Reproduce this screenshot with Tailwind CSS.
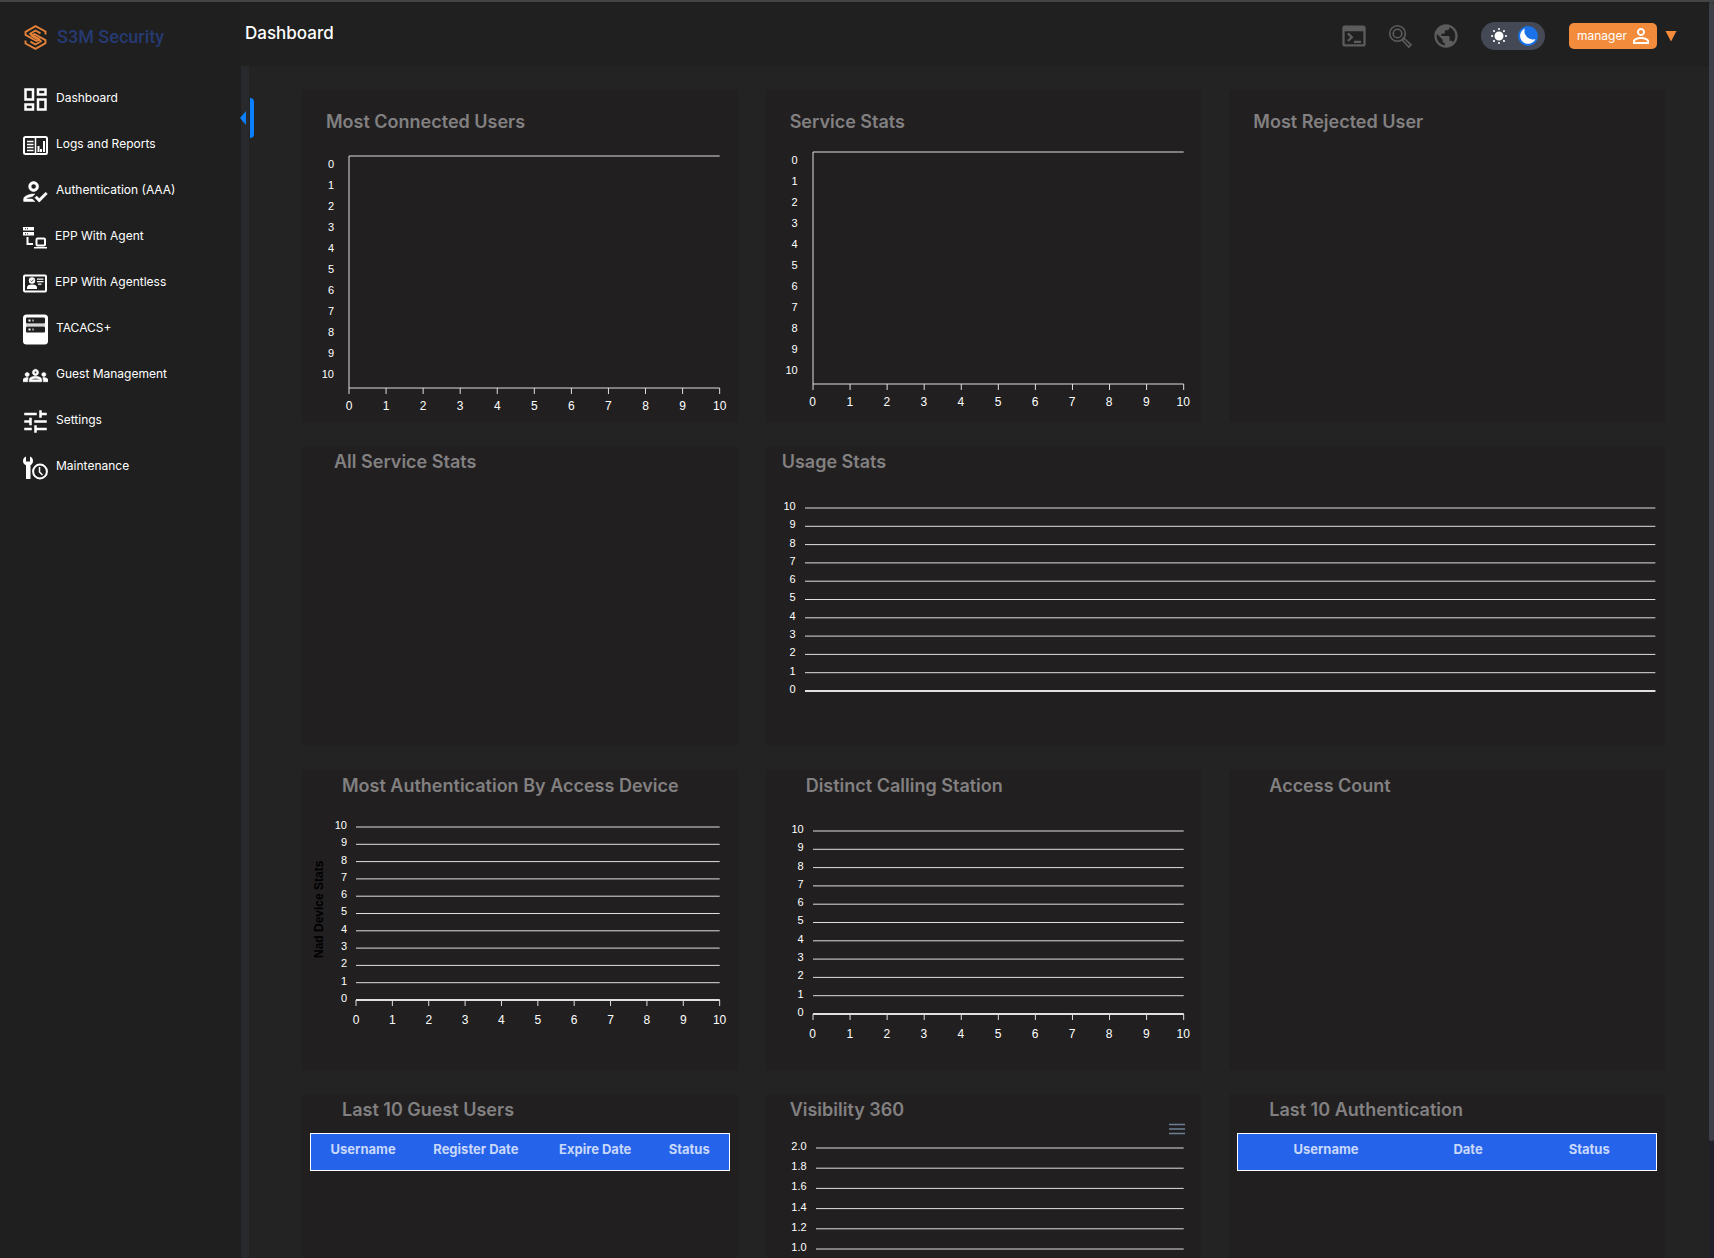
<!DOCTYPE html>
<html lang="en">
<head>
  <meta charset="UTF-8" />
  <meta name="viewport" content="width=device-width, initial-scale=1.0" />
  <title>S3M Security - Dashboard</title>
  <script src="https://cdn.jsdelivr.net/npm/@tailwindcss/browser@4"></script>
</head>
<body class="bg-[#222322] text-white font-['Inter',sans-serif] h-screen flex flex-col overflow-hidden">

  <div class="h-0.5 shrink-0 bg-[#444444]"></div>

  <div class="flex flex-1 min-h-0">

    <!-- Sidebar -->
    <aside class="w-[241px] shrink-0 bg-[#1f1f1f] flex flex-col">
      <a href="#" class="flex items-center gap-[10px] h-[70px] pl-6 text-[#263a72] font-['Roboto',sans-serif] font-medium text-lg">
        <svg class="w-[23px] h-[25px]" viewBox="0 0 23 25" fill="none" stroke="#e58239" stroke-width="1.9" stroke-linejoin="round">
          <path d="M21.500 9.500V6.500L11.500 1.200L1.500 6.800V9.800L12.500 16L15.500 14.300L6 8.800L11.500 5.500L16.500 8.300" />
          <path d="M1.500 15.500V18.500L11.500 23.800L21.500 18.200V15.200L10.500 9L7.500 10.700L17 16.200L11.500 19.500L6.500 16.700" />
        </svg>
        S3M Security
      </a>
      <nav id="menu" class="flex flex-col pl-[23px] pt-1"></nav>
    </aside>

    <div class="flex-1 min-w-0 flex flex-col">

      <!-- Top bar -->
      <header class="h-16 shrink-0 bg-[#202020] flex items-center justify-between pl-1 pr-8">
        <h1 class="text-[17px] font-medium">Dashboard</h1>
        <div class="flex items-center pt-1 text-[#5c5c5c]">
          <div class="flex items-center gap-[18px]">
            <button type="button" aria-label="Console">
              <svg class="size-7" viewBox="0 0 24 24" fill="currentColor"><path d="M20 3H4c-1.110 0-2 .9-2 2v14c0 1.100.89 2 2 2h16c1.100 0 2-.9 2-2V5c0-1.100-.89-2-2-2zm0 16H4V8h16v11zm-2-1h-6v-2h6v2zM7.500 17l-1.410-1.410L8.670 13l-2.590-2.590L7.500 9l4 4-4 4z"/></svg>
            </button>
            <button type="button" aria-label="Search">
              <svg class="size-7" viewBox="0 0 28 28" fill="none" stroke="currentColor" stroke-width="1.6"><circle cx="11.500" cy="11.500" r="7.800"/><circle cx="11.500" cy="11.500" r="4.300"/><path d="M16 17.800L17.800 16L25 22.800L22.800 25Z"/></svg>
            </button>
            <button type="button" aria-label="Language">
              <svg class="size-7" viewBox="0 0 24 24" fill="currentColor"><path d="M12 2C6.480 2 2 6.480 2 12s4.480 10 10 10 10-4.480 10-10S17.520 2 12 2zm-1 17.930c-3.950-.49-7-3.850-7-7.930 0-.62.08-1.210.21-1.790L9 15v1c0 1.100.9 2 2 2v1.930zm6.900-2.540c-.26-.81-1-1.390-1.900-1.390h-1v-3c0-.55-.45-1-1-1H8v-2h2c.55 0 1-.45 1-1V7h2c1.100 0 2-.9 2-2v-.41c2.930 1.190 5 4.060 5 7.410 0 2.080-.8 3.970-2.100 5.390z"/></svg>
            </button>
          </div>
          <label class="ml-[21px] w-16 h-7 rounded-full bg-[#444955] flex items-center justify-between pl-2 pr-[7px] cursor-pointer">
            <input type="checkbox" class="sr-only" aria-label="Dark mode" checked />
            <svg class="size-5" viewBox="0 0 20 20" fill="#ffffff" stroke="#ffffff" stroke-width="2"><circle cx="10" cy="10" r="3.500"/><path stroke-linecap="round" d="M10 3v.1M10 16.900v.1M3 10h.1M16.900 10h.1M5 5l.1.100M14.900 14.900l.1.100M15 5l-.1.100M5.100 14.900l-.1.100"/></svg>
            <svg class="size-5" viewBox="0 0 20 20"><circle cx="10" cy="10" r="10" fill="#1b72e8"/><path fill="#ffffff" d="M7 2.500A8 8 0 1 0 17.500 13A8.200 8.200 0 0 1 7 2.500Z"/></svg>
          </label>
          <button type="button" class="ml-6 w-[88px] h-[26px] rounded-[5px] bg-[#f38b3c] text-white text-xs flex items-center justify-between px-2">
            manager
            <svg class="w-4 h-4" viewBox="4 4 16 16" fill="currentColor"><path d="M12 5.900c1.160 0 2.100.94 2.100 2.100s-.94 2.100-2.100 2.100S9.900 9.160 9.900 8s.94-2.100 2.100-2.100m0 9c2.970 0 6.100 1.460 6.100 2.100v1.100H5.900V17c0-.64 3.130-2.100 6.100-2.100M12 4C9.790 4 8 5.790 8 8s1.790 4 4 4 4-1.790 4-4-1.790-4-4-4zm0 9c-2.670 0-8 1.340-8 4v3h16v-3c0-2.660-5.330-4-8-4z"/></svg>
          </button>
          <button type="button" aria-label="Open user menu" class="ml-2 text-[#f38b3c]">
            <svg class="w-3 h-3" viewBox="0 0 12 12" fill="currentColor"><path d="M0.500 1H11.500L6 11.500Z"/></svg>
          </button>
        </div>
      </header>

      <div class="flex flex-1 min-h-0">
        <div class="relative w-2 shrink-0 bg-[#27292c]">
          <button type="button" aria-label="Collapse sidebar" class="absolute top-8 -left-px flex items-center gap-1">
            <svg class="w-1.5 h-3.5" viewBox="0 0 6 14" fill="#0a80ff"><path d="M6 0V14L0 7Z"/></svg>
            <span class="w-1 h-10 rounded-r bg-[#0a80ff]"></span>
          </button>
        </div>

        <main class="flex-1 min-w-0 overflow-y-auto [scrollbar-width:none] pl-[53px] pr-11 pt-6">
          <div class="grid grid-cols-3 gap-x-7 gap-y-6 text-[#828080]">

            <section class="bg-[#211f20] h-[332px] pt-4">
              <h2 class="pl-6 text-lg leading-8 font-semibold">Most Connected Users</h2>
              <div data-chart="bar" class="mt-[18px] pr-[18px] grid grid-cols-[32px_1fr] gap-x-[15px]"></div>
            </section>

            <section class="bg-[#211f20] h-[332px] pt-4">
              <h2 class="pl-6 text-lg leading-8 font-semibold">Service Stats</h2>
              <div data-chart="bar" class="mt-[14px] pr-[18px] grid grid-cols-[32px_1fr] gap-x-[15px]"></div>
            </section>

            <section class="bg-[#211f20] h-[332px] pt-4">
              <h2 class="pl-6 text-lg leading-8 font-semibold">Most Rejected User</h2>
            </section>

            <section class="bg-[#211f20] h-[300px]">
              <h2 class="pl-8 text-lg leading-8 font-semibold">All Service Stats</h2>
            </section>

            <section class="bg-[#211f20] h-[300px] col-span-2">
              <h2 class="pl-4 text-lg leading-8 font-semibold">Usage Stats</h2>
              <div data-chart="usage" class="mt-[30px] pr-[10px] grid grid-cols-[30px_1fr] gap-x-[9px]"></div>
            </section>

            <section class="bg-[#211f20] h-[300px]">
              <h2 class="pl-10 text-lg leading-8 font-semibold">Most Authentication By Access Device</h2>
              <div class="mt-[25px] pl-2 pr-[18px] flex">
                <p class="w-[18px] h-[164px] text-black text-xs leading-[18px] font-bold text-center [writing-mode:vertical-rl] rotate-180 font-['Liberation_Sans',sans-serif]">Nad Device Stats</p>
                <div data-chart="device" class="flex-1 grid grid-cols-[19px_1fr] gap-x-[9px]"></div>
              </div>
            </section>

            <section class="bg-[#211f20] h-[300px]">
              <h2 class="pl-10 text-lg leading-8 font-semibold">Distinct Calling Station</h2>
              <div data-chart="station" class="mt-[29px] pr-[18px] grid grid-cols-[38px_1fr] gap-x-[9px]"></div>
            </section>

            <section class="bg-[#211f20] h-[300px]">
              <h2 class="pl-10 text-lg leading-8 font-semibold">Access Count</h2>
            </section>

            <section class="bg-[#211f20] h-[300px] px-2">
              <h2 class="pl-8 text-lg leading-8 font-semibold">Last 10 Guest Users</h2>
              <table class="mt-[7px] w-full table-fixed border border-white bg-[#2563eb] text-[#c8d8fb] text-[13px]">
                <thead>
                  <tr class="align-top">
                    <th class="w-[25%] h-[37px] pt-1.5 font-bold">Username</th>
                    <th class="w-[29%] pt-1.5 font-bold">Register Date</th>
                    <th class="w-[28%] pt-1.5 font-bold">Expire Date</th>
                    <th class="w-[18%] pt-1.5 pr-1 font-bold">Status</th>
                  </tr>
                </thead>
              </table>
            </section>

            <section class="relative bg-[#211f20] h-[300px]">
              <h2 class="pl-6 text-lg leading-8 font-semibold">Visibility 360</h2>
              <button type="button" aria-label="Chart menu" class="absolute right-4 top-[29px]">
                <svg class="w-4 h-3" viewBox="0 0 16 12" stroke="#6e8192" stroke-width="1.500"><path d="M0 1.500H16M0 6H16M0 10.500H16"/></svg>
              </button>
              <div data-chart="visibility" class="mt-[22px] pr-[18px] grid grid-cols-[41px_1fr] gap-x-[9px]"></div>
            </section>

            <section class="bg-[#211f20] h-[300px] px-2">
              <h2 class="pl-8 text-lg leading-8 font-semibold">Last 10 Authentication</h2>
              <table class="mt-[7px] w-full table-fixed border border-white bg-[#2563eb] text-[#c8d8fb] text-[13px]">
                <thead>
                  <tr class="align-top">
                    <th class="w-[42%] h-[37px] pt-1.5 font-bold">Username</th>
                    <th class="w-[26%] pt-1.5 font-bold">Date</th>
                    <th class="w-[32%] pt-1.5 font-bold">Status</th>
                  </tr>
                </thead>
              </table>
            </section>

          </div>
        </main>
      </div>
    </div>

    <!-- Page scrollbar -->
    <div class="w-[5px] shrink-0 bg-[#21202a]">
      <div class="h-[1139px] rounded bg-[#3d4047]"></div>
    </div>
  </div>

  <script>
    const icons = {
      dashboard: '<svg class="w-[25px] h-[25px]" viewBox="2 2 20 20" fill="currentColor"><path d="M19 5v2h-4V5h4M9 5v6H5V5h4m10 8v6h-4v-6h4M9 17v2H5v-2h4M21 3h-8v6h8V3zM11 3H3v10h8V3zm10 8h-8v10h8V11zm-10 4H3v6h8v-6z"/></svg>',
      reports: '<svg class="w-[25px] h-[25px]" viewBox="0 0 25 25" fill="none" stroke="currentColor"><rect x="1" y="4" width="23" height="17" rx="1.500" stroke-width="2"/><path stroke-width="1.500" d="M12.500 4V21M4 8.500H10.500M4 11.500H10.500M4 14.500H10.500M4 17.500H10.500"/><path stroke-width="2" d="M15.500 19V13M18 19V16M21 19V8"/></svg>',
      auth: '<svg class="w-[25px] h-[25px]" viewBox="2.500 2 20 20" fill="currentColor" stroke="currentColor" stroke-width=".4"><path d="M11 12c2.210 0 4-1.790 4-4s-1.790-4-4-4-4 1.790-4 4 1.790 4 4 4zm0-6c1.100 0 2 .9 2 2s-.9 2-2 2-2-.9-2-2 .9-2 2-2zM5 18c.2-.63 2.570-1.680 4.960-1.940l2.040-2c-.39-.04-.68-.06-1-.06-2.670 0-8 1.340-8 4v2h9l-2-2H5zm15.600-5.500l-5.130 5.170-2.070-2.080L12 17l3.470 3.500L22 13.910z"/></svg>',
      agent: '<svg class="w-6 h-[25px]" viewBox="0 0 24 25" fill="currentColor"><path fill-rule="evenodd" d="M0 2H11V5.500H0ZM2 3.300V4.200H3V3.300ZM4 3.300V4.200H5V3.300ZM0 7H11V10.500H0ZM2 8.300V9.200H3V8.300ZM4 8.300V9.200H5V8.300Z"/><path d="M3.500 12H5.500V18H10V20H3.500Z"/><path d="M14.500 20.500Q13.500 20.500 13.500 19.500V14.500Q13.500 13.500 14.500 13.500H21Q22 13.500 22 14.500V19.500Q22 20.500 21 20.500Z" fill="none" stroke="currentColor" stroke-width="2"/><path d="M11 22H24V23.500H11Z"/></svg>',
      agentless: '<svg class="w-6 h-[25px]" viewBox="0 0 24 25" fill="currentColor"><rect x="1" y="4.500" width="22" height="16" rx="1" fill="none" stroke="currentColor" stroke-width="2"/><path d="M4 18V16.500C4 14.800 6 13.500 9 13.500S14 14.800 14 16.500V18Z"/><circle cx="9" cy="9.500" r="3.200"/><path d="M7.500 9.500L8.700 10.700L10.700 8.500" fill="none" stroke="#1f1f1f" stroke-width=".8"/><path d="M14 7.500H20.500V8.700H14ZM14 10H20.500V11.200H14ZM15 12.500H18.500V13.700H15Z"/></svg>',
      tacacs: '<svg class="w-[25px] h-[31px]" viewBox="0 0 25 31"><rect width="25" height="30" y="0.500" rx="3.500" fill="currentColor"/><g fill="#1f1f1f"><rect x="3" y="3.500" width="19" height="6" rx="1"/><rect x="3" y="12.500" width="19" height="6" rx="1"/></g><path d="M5.500 5.500h2v2h-2zM9.500 5.500h1v2h-1zM5.500 14.500h2v2h-2zM9.500 14.500h1v2h-1z" fill="currentColor"/><path d="M3 11H22" stroke="#9a9a9a" stroke-width=".8"/></svg>',
      guests: '<svg class="w-[25px] h-[25px]" viewBox="0 0 24 24" fill="currentColor" stroke="currentColor" stroke-width=".5"><path d="M4 13c1.100 0 2-.9 2-2s-.9-2-2-2-2 .9-2 2 .9 2 2 2zm1.130 1.100c-.37-.06-.74-.1-1.130-.1-.99 0-1.930.21-2.780.58C.48 14.900 0 15.620 0 16.430V18h4.500v-1.610c0-.83.23-1.610.63-2.290zM20 13c1.100 0 2-.9 2-2s-.9-2-2-2-2 .9-2 2 .9 2 2 2zm4 3.430c0-.81-.48-1.530-1.220-1.850-.85-.37-1.790-.58-2.780-.58-.39 0-.76.04-1.130.1.400.68.630 1.460.630 2.290V18H24v-1.570zm-7.760-2.780c-1.170-.52-2.610-.9-4.240-.9-1.630 0-3.070.39-4.240.9C6.680 14.130 6 15.210 6 16.390V18h12v-1.610c0-1.180-.68-2.260-1.760-2.740zM8.070 16c.09-.23.13-.39.91-.69.97-.38 1.990-.56 3.020-.56s2.050.18 3.020.56c.77.3.81.46.91.69H8.070zM12 8c.55 0 1 .45 1 1s-.45 1-1 1-1-.45-1-1 .45-1 1-1m0-2c-1.660 0-3 1.340-3 3s1.340 3 3 3 3-1.340 3-3-1.340-3-3-3z"/></svg>',
      settings: '<svg class="w-[25px] h-[25px]" viewBox="2 2 20 20" fill="currentColor"><path d="M3 17v2h6v-2H3zM3 5v2h10V5H3zm10 16v-2h8v-2h-8v-2h-2v6h2zM7 9v2H3v2h4v2h2V9H7zm14 4v-2H11v2h10zm-6-4h2V7h4V5h-4V3h-2v6z"/></svg>',
      maintenance: '<svg class="w-[25px] h-[25px]" viewBox="0 0 25 25" fill="currentColor"><path d="M3 1.500V6.500H7V1.500C9 2.300 10 4 10 6C10 8 9 9.500 7.500 10.300V24H3V10.300C1 9.500 0 8 0 6C0 4 1 2.300 3 1.500Z"/><circle cx="17" cy="16.500" r="6.900" fill="none" stroke="currentColor" stroke-width="2"/><path d="M16.500 12V17L19.500 20" fill="none" stroke="currentColor" stroke-width="1.500"/></svg>'
    };

    const menu = [
      ['dashboard', 'Dashboard'],
      ['reports', 'Logs and Reports'],
      ['auth', 'Authentication (AAA)'],
      ['agent', 'EPP With Agent'],
      ['agentless', 'EPP With Agentless'],
      ['tacacs', 'TACACS+'],
      ['guests', 'Guest Management'],
      ['settings', 'Settings'],
      ['maintenance', 'Maintenance']
    ];

    document.getElementById('menu').innerHTML = menu.map(([icon, label]) => `
      <a href="#" class="h-[46px] flex items-center gap-2 text-xs hover:text-orange-300">${icons[icon]}<span class="pb-0.5">${label}</span></a>
    `).join('');

    const steps = [0, 1, 2, 3, 4, 5, 6, 7, 8, 9, 10];
    const down = [...steps].reverse();

    // height is a Tailwind class, xGap is the space between ticks and labels
    const charts = {
      bar: { height: 'h-[232px]', y: steps, bands: true, xGap: 'mt-1' },
      usage: { height: 'h-[183px]', y: down },
      device: { height: 'h-[173px]', y: down, xGap: 'mt-1.5' },
      station: { height: 'h-[183px]', y: down, xGap: 'mt-1.5' },
      visibility: { height: 'h-[202px]', y: down.map(n => (n / 5).toFixed(1)) }
    };

    document.querySelectorAll('[data-chart]').forEach(el => {
      const c = charts[el.dataset.chart];
      const yLabels = c.bands
        ? c.y.map(n => `<span class="flex-1 flex items-center justify-end pb-0.5">${n}</span>`).join('')
        : c.y.map(n => `<span class="h-0 flex items-center justify-end">${n}</span>`).join('');
      const lines = c.bands
        ? `<line x1="0" x2="100%" y1="0" y2="0"/><line x1="0" x2="0" y1="0" y2="100%"/><line x1="0" x2="100%" y1="100%" y2="100%"/>`
        : steps.map(n => `<line x1="0" x2="100%" y1="${n * 10}%" y2="${n * 10}%"/>`).join('') +
          `<line x1="0" x2="100%" y1="100%" y2="100%" stroke-width="2"/>`;

      el.innerHTML = `
        <div class="${c.height} flex flex-col justify-between -mt-0.5 mb-0.5 text-[11px] leading-3 text-white font-['Liberation_Sans',sans-serif]">${yLabels}</div>
        <svg class="w-full ${c.height} overflow-visible" stroke="#e0e0e0">${lines}</svg>
        ${c.xGap ? `
        <div class="col-start-2">
          <svg class="w-full h-1.5 overflow-visible block" stroke="#e0e0e0">${steps.map(n => `<line x1="${n * 10}%" x2="${n * 10}%" y1="0" y2="100%"/>`).join('')}</svg>
          <div class="${c.xGap} flex justify-between text-xs leading-4 text-white font-['Liberation_Sans',sans-serif]">
            ${steps.map(n => `<span class="w-0 flex justify-center">${n}</span>`).join('')}
          </div>
        </div>` : ''}
      `;
    });
  </script>
</body>
</html>
